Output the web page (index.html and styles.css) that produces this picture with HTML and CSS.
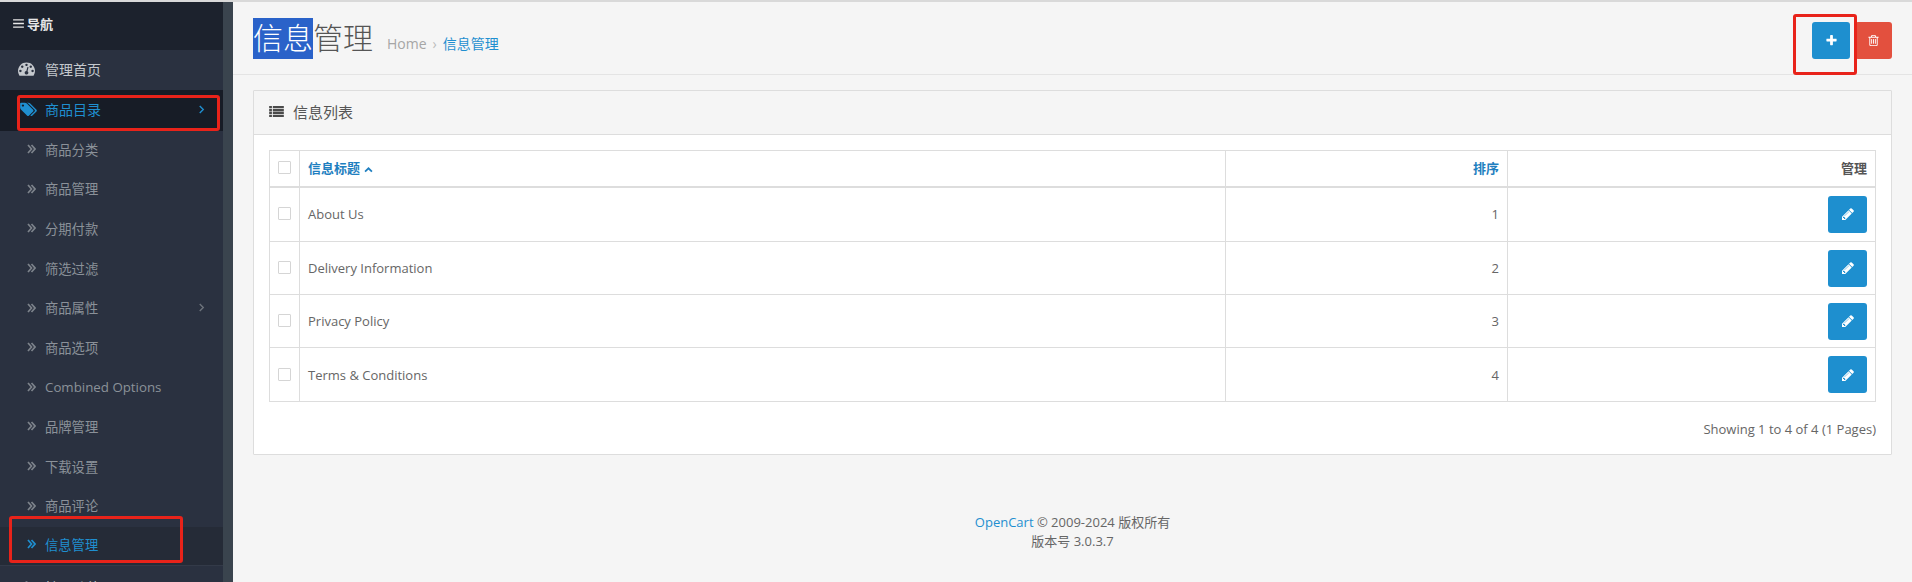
FILE: index.html
```html
<!DOCTYPE html>
<html lang="zh-CN">
<head>
<meta charset="utf-8">
<title>信息管理</title>
<link rel="stylesheet" href="styles.css">
</head>
<body>
<svg class="defs" width="0" height="0" aria-hidden="true">
  <symbol id="i-double" viewBox="0 0 9 10"><path d="M1 1l3.500 4-3.500 4M4.500 1l3.500 4-3.500 4" fill="none" stroke="currentColor" stroke-width="1.700"/></symbol>
  <symbol id="i-right" viewBox="0 0 8 12"><path d="M2 2l4 4-4 4" fill="none" stroke="currentColor" stroke-width="1.600"/></symbol>
  <symbol id="i-pencil" viewBox="0 0 1792 1792"><path fill="currentColor" d="M491 1536l91-91-235-235-91 91v107h128v128h107zm523-928q0-22-22-22-10 0-17 7l-542 542q-7 7-7 17 0 22 22 22 10 0 17-7l542-542q7-7 7-17zm-54-192l416 416-832 832h-416v-416zm683 96q0 53-37 90l-166 166-416-416 166-165q36-38 90-38 53 0 91 38l235 234q37 39 37 91z"/></symbol>
</svg>
<div class="page">
  <aside class="sidebar">
    <div class="nav-head">
      <svg class="bars" viewBox="0 0 12 10"><path d="M0 1h12M0 5h12M0 9h12" stroke="currentColor" stroke-width="1.600"/></svg>
      <span>导航</span>
    </div>
    <ul class="menu">
      <li class="item top">
        <svg class="ico" viewBox="0 0 1792 1792"><path fill="currentColor" d="M384 1152q0-53-37.500-90.500t-90.500-37.500-90.500 37.500-37.500 90.500 37.500 90.500 90.500 37.500 90.500-37.500 37.500-90.500zm192-448q0-53-37.500-90.500t-90.500-37.500-90.500 37.500-37.500 90.500 37.500 90.500 90.500 37.500 90.500-37.500 37.500-90.500zm428 481l101-382q6-26-7.500-48.500t-38.500-29.500-48 6.500-30 39.500l-101 382q-60 5-107 43.500t-63 98.500q-20 77 20 146t117 89 146-20 89-117q16-60-6-117t-72-91zm660-33q0-53-37.500-90.500t-90.500-37.500-90.500 37.500-37.500 90.500 37.500 90.500 90.500 37.500 90.500-37.500 37.500-90.500zm-640-640q0-53-37.500-90.500t-90.500-37.500-90.500 37.500-37.500 90.500 37.500 90.500 90.500 37.500 90.500-37.500 37.500-90.500zm448 192q0-53-37.500-90.500t-90.500-37.500-90.500 37.500-37.500 90.500 37.500 90.500 90.500 37.500 90.500-37.500 37.500-90.500zm320 448q0 261-141 483-19 29-54 29h-1402q-35 0-54-29-141-221-141-483 0-182 71-348t191-286 286-191 348-71 348 71 286 191 191 286 71 348z"/></svg>
        <span>管理首页</span>
      </li>
      <li class="item top active">
        <svg class="ico tags" viewBox="0 0 2048 1792"><path fill="currentColor" d="M576 448q0-53-37.500-90.500t-90.500-37.500-90.500 37.500-37.500 90.500 37.500 90.500 90.500 37.500 90.500-37.500 37.500-90.500zm1067 576q0 53-37 90l-491 492q-39 37-91 37-53 0-90-37l-715-716q-38-37-64.500-101t-26.500-117v-416q0-52 38-90t90-38h416q53 0 117 26.500t102 64.500l715 714q37 39 37 91zm384 0q0 53-37 90l-491 492q-38 37-90 37-36 0-59-14t-53-45l470-470q37-37 37-90 0-52-37-91l-715-714q-38-38-102-64.500t-117-26.500h224q53 0 117 26.500t102 64.500l715 714q37 39 37 91z"/></svg>
        <span>商品目录</span>
        <svg class="arrow"><use href="#i-right"/></svg>
      </li>
      <li class="item sub"><svg class="dbl"><use href="#i-double"/></svg><span>商品分类</span></li>
      <li class="item sub"><svg class="dbl"><use href="#i-double"/></svg><span>商品管理</span></li>
      <li class="item sub"><svg class="dbl"><use href="#i-double"/></svg><span>分期付款</span></li>
      <li class="item sub"><svg class="dbl"><use href="#i-double"/></svg><span>筛选过滤</span></li>
      <li class="item sub"><svg class="dbl"><use href="#i-double"/></svg><span>商品属性</span><svg class="arrow"><use href="#i-right"/></svg></li>
      <li class="item sub"><svg class="dbl"><use href="#i-double"/></svg><span>商品选项</span></li>
      <li class="item sub"><svg class="dbl"><use href="#i-double"/></svg><span>Combined Options</span></li>
      <li class="item sub"><svg class="dbl"><use href="#i-double"/></svg><span>品牌管理</span></li>
      <li class="item sub"><svg class="dbl"><use href="#i-double"/></svg><span>下载设置</span></li>
      <li class="item sub"><svg class="dbl"><use href="#i-double"/></svg><span>商品评论</span></li>
      <li class="item sub current"><svg class="dbl"><use href="#i-double"/></svg><span>信息管理</span></li>
      <li class="item top last">
        <svg class="ico" viewBox="0 0 17 17"><path fill="currentColor" d="M2 6h4.500V4.500a2 2 0 1 1 4 0V6H15v9H2z"/></svg>
        <span>扩展功能</span>
      </li>
    </ul>
  </aside>
  <div class="strip"></div>
  <main class="content">
    <header class="page-header">
      <div class="title-wrap">
        <h1 class="title"><span class="selected">信息</span>管理</h1>
        <div class="crumbs"><span class="home">Home</span><span class="sep">›</span><span class="link">信息管理</span></div>
      </div>
      <div class="actions">
        <button class="btn primary" type="button">
          <svg class="btn-ico" viewBox="0 0 1792 1792"><path fill="currentColor" d="M1600 736v192q0 40-28 68t-68 28h-416v416q0 40-28 68t-68 28h-192q-40 0-68-28t-28-68v-416h-416q-40 0-68-28t-28-68v-192q0-40 28-68t68-28h416v-416q0-40 28-68t68-28h192q40 0 68 28t28 68v416h416q40 0 68 28t28 68z"/></svg>
        </button>
        <button class="btn danger" type="button">
          <svg class="btn-ico" viewBox="0 0 1792 1792"><path fill="currentColor" d="M704 736v576q0 14-9 23t-23 9h-64q-14 0-23-9t-9-23v-576q0-14 9-23t23-9h64q14 0 23 9t9 23zm256 0v576q0 14-9 23t-23 9h-64q-14 0-23-9t-9-23v-576q0-14 9-23t23-9h64q14 0 23 9t9 23zm256 0v576q0 14-9 23t-23 9h-64q-14 0-23-9t-9-23v-576q0-14 9-23t23-9h64q14 0 23 9t9 23zm128 724v-948h-896v948q0 22 7 40.500t14.500 27 10.500 8.500h832q3 0 10.500-8.500t14.500-27 7-40.500zm-672-1076h448l-48-117q-7-9-17-11h-317q-10 2-17 11zm928 32v64q0 14-9 23t-23 9h-96v948q0 83-47 143.500t-113 60.500h-832q-66 0-113-58.500t-47-141.500v-952h-96q-14 0-23-9t-9-23v-64q0-14 9-23t23-9h309l70-167q15-37 54-63t79-26h320q40 0 79 26t54 63l70 167h309q14 0 23 9t9 23z"/></svg>
        </button>
      </div>
    </header>

    <section class="panel">
      <div class="panel-head">
        <svg class="list-ico" viewBox="0 0 16 12"><path fill="currentColor" d="M0 0h3v2.400H0zM4 0h12v2.400H4zM0 3.200h3v2.400H0zM4 3.200h12v2.400H4zM0 6.400h3v2.400H0zM4 6.400h12v2.400H4zM0 9.600h3V12H0zM4 9.600h12V12H4z"/></svg>
        <span>信息列表</span>
      </div>
      <div class="panel-body">
        <table class="grid">
          <colgroup><col class="c-check"><col class="c-title"><col class="c-sort"><col class="c-act"></colgroup>
          <thead>
            <tr>
              <th class="check"><span class="box"></span></th>
              <th class="lnk">信息标题 <svg class="caret" viewBox="0 0 10 7"><path d="M1 5.500l4-4 4 4" fill="none" stroke="currentColor" stroke-width="2"/></svg></th>
              <th class="lnk num">排序</th>
              <th class="num">管理</th>
            </tr>
          </thead>
          <tbody>
            <tr class="tall"><td class="check"><span class="box"></span></td><td>About Us</td><td class="num">1</td><td class="num"><button class="btn primary edit" type="button"><svg class="pen"><use href="#i-pencil"/></svg></button></td></tr>
            <tr><td class="check"><span class="box"></span></td><td>Delivery Information</td><td class="num">2</td><td class="num"><button class="btn primary edit" type="button"><svg class="pen"><use href="#i-pencil"/></svg></button></td></tr>
            <tr><td class="check"><span class="box"></span></td><td>Privacy Policy</td><td class="num">3</td><td class="num"><button class="btn primary edit" type="button"><svg class="pen"><use href="#i-pencil"/></svg></button></td></tr>
            <tr class="end"><td class="check"><span class="box"></span></td><td>Terms &amp; Conditions</td><td class="num">4</td><td class="num"><button class="btn primary edit" type="button"><svg class="pen"><use href="#i-pencil"/></svg></button></td></tr>
          </tbody>
        </table>
        <div class="paging">Showing 1 to 4 of 4 (1 Pages)</div>
      </div>
    </section>

    <footer class="foot">
      <div><span class="link">OpenCart</span> © 2009-2024 版权所有</div>
      <div>版本号 3.0.3.7</div>
    </footer>
  </main>
</div>
<div class="mark mark-add"></div>
<div class="mark mark-cat"></div>
<div class="mark mark-info"></div>
</body>
</html>
```

FILE: styles.css
```css
* { box-sizing: border-box; }
html, body { margin: 0; padding: 0; height: 582px; overflow: hidden; }
body {
  position: relative;
  font-family: "Open Sans", "Noto Sans CJK SC", sans-serif;
  font-size: 13px;
  color: #666;
  background: #f5f5f5;
  border-top: 2px solid #d9d9d9;
}
.defs { position: absolute; }
.page { display: flex; height: 580px; }

/* sidebar */
.sidebar { width: 223px; flex: none; background: #2a3140; color: #9aa0a8; overflow: hidden; }
.strip { width: 10px; flex: none; background: #3a444e; }
.nav-head {
  height: 48px; display: flex; align-items: center; gap: 3px; padding: 0 0 5px 13px;
  background: #1c222d; color: #e8e8e8; font-size: 13px; font-weight: 700;
}
.bars { width: 11px; height: 9px; }
.menu { list-style: none; margin: 0; padding: 0; }
.item { display: flex; align-items: center; position: relative; padding-bottom: 3px; }
.top { height: 40px; padding-left: 18px; color: #c4c8cd; font-size: 14px; }
.top .ico { width: 17px; height: 17px; margin-right: 10px; flex: none; }
.top .tags { width: 18px; margin-left: 1px; margin-right: 8px; }
.top.active { background: #171c26; color: #1f8fd0; height: 41px; }
.sub { height: 39.600px; padding-left: 27px; color: #8b9199; font-size: 13.300px; }
.dbl { width: 9px; height: 10px; margin-right: 9px; flex: none; color: #7d838b; }
.arrow { width: 7px; height: 11px; position: absolute; right: 18px; top: 50%; margin-top: -7px; color: #6e747c; }
.active .arrow { color: #1f8fd0; }
.current { background: #252b37; color: #1f8fd0; height: 38px; }
.current .dbl { color: #1f8fd0; }
.last { border-top: 1px solid #333a48; height: 42px; padding: 2px 0 0 18px; }

/* main */
.content { flex: 1; min-width: 0; display: flex; flex-direction: column; }
.page-header {
  height: 73px; flex: none; display: flex; justify-content: space-between; align-items: flex-start;
  padding: 16px 20px 0 20px; border-bottom: 1px solid #e4e4e4;
}
.title-wrap { display: flex; align-items: flex-end; }
.title { margin: 0; font-size: 30px; line-height: 39px; font-weight: 300; color: #555; }
.selected { background: #2a62c9; color: #fff; display: inline-block; padding-bottom: 2px; }
.crumbs { display: flex; align-items: center; font-size: 14px; margin: 0 0 5px 14px; line-height: 20px; }
.home { color: #a6a6a6; }
.sep { color: #bbb; margin: 0 6px; }
.link { color: #1f8fd0; }
.actions { display: flex; gap: 5px; margin-top: 4px; }
.btn {
  width: 38px; height: 37px; padding: 0; border: 0; border-radius: 3px;
  display: inline-flex; align-items: center; justify-content: center; color: #fff;
}
.primary { background: #1e8fcf; }
.danger { background: #e3503e; width: 37px; }
.btn-ico { width: 13px; height: 13px; }

/* panel */
.panel {
  margin: 15px 20px 0 20px; height: 365px; flex: none; background: #fff;
  border: 1px solid #ddd; border-radius: 1px;
}
.panel-head {
  height: 44px; display: flex; align-items: center; gap: 9px; padding: 0 0 2px 15px;
  background: #f5f5f5; border-bottom: 1px solid #ddd; font-size: 15px; color: #555;
}
.list-ico { width: 15px; height: 11px; color: #4a4a4a; }
.panel-body { padding: 15px 15px 0; }
.grid { width: 100%; table-layout: fixed; border-collapse: collapse; border: 1px solid #ddd; }
.c-check { width: 30px; }
.c-sort { width: 282px; }
.c-act { width: 368px; }
.grid th, .grid td { border: 1px solid #ddd; padding: 0 8px; font-weight: 400; text-align: left; }
.grid thead tr { height: 36px; }
.grid th { border-bottom: 2px solid #ddd; font-weight: 600; color: #555; padding-bottom: 1px; }
.grid tbody tr { height: 53px; }
.grid tbody tr.tall { height: 55px; }
.grid tbody tr.end { height: 54px; }
.grid .lnk { color: #1f7fc0; }
.grid .num { text-align: right; }
.grid th.check, .grid td.check { padding: 0 0 4px 0; text-align: center; }
.box { display: inline-block; width: 13px; height: 13px; border: 1px solid #d5d5d5; border-radius: 1px; background: #fff; vertical-align: middle; }
.caret { width: 9px; height: 6px; margin-left: 1px; }
.edit { width: 39px; height: 37px; vertical-align: middle; }
.pen { width: 14px; height: 14px; }
.paging { text-align: right; margin-top: 18px; line-height: 18px; }

/* footer */
.foot { text-align: center; margin-top: 58px; line-height: 19px; }

/* annotation rectangles */
.mark { position: absolute; border: 3px solid #e8231a; border-radius: 3px; }
.mark-add { left: 1793px; top: 12px; width: 64px; height: 61px; }
.mark-cat { left: 17px; top: 93px; width: 203px; height: 36px; }
.mark-info { left: 9px; top: 514px; width: 174px; height: 47px; }
```
